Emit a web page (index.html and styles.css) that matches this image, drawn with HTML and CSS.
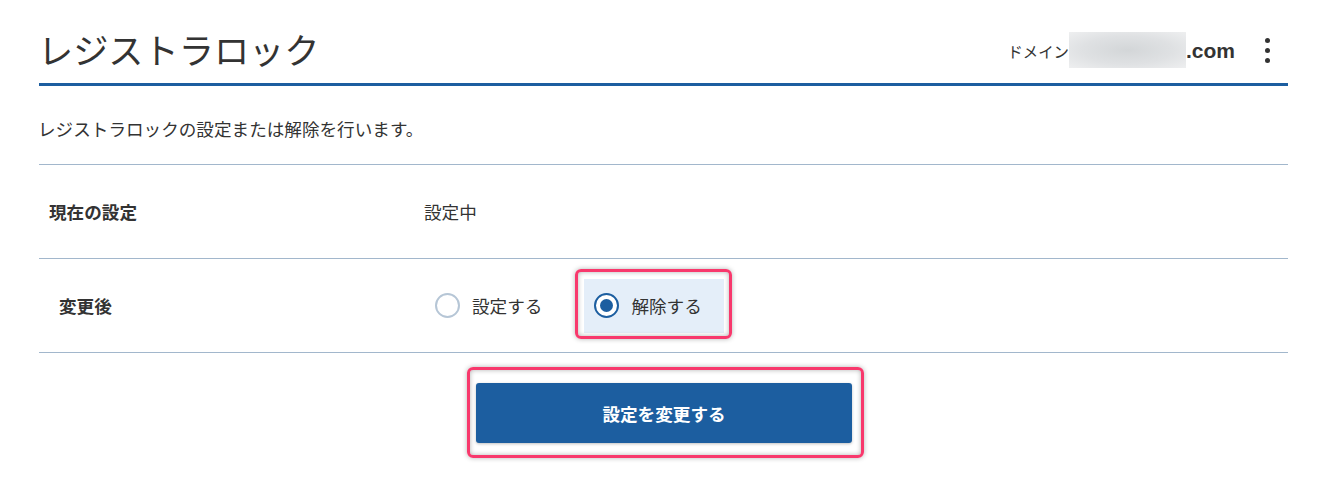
FILE: index.html
```html
<!DOCTYPE html>
<html lang="ja">
  <head>
    <meta charset="utf-8">
    <title>レジストラロック</title>
    <link rel="stylesheet" href="styles.css">
  </head>
  <body>
  <div class="page">
    <header class="head">
      <h1 class="title">レジストラロック</h1>
      <div class="domain">
        <span class="domain-label">ドメイン</span>
        <span class="domain-blur"></span>
        <span class="domain-tld">.com</span>
        <span class="kebab"><i></i><i></i><i></i></span>
      </div>
    </header>

    <p class="lead">レジストラロックの設定または解除を行います。</p>

    <div class="rows">
      <div class="row">
        <div class="row-label">現在の設定</div>
        <div class="row-value">設定中</div>
      </div>
      <div class="row">
        <div class="row-label row-label--wide">変更後</div>
        <div class="row-value">
          <div class="choices">
            <label class="choice">
              <input type="radio" name="lock" value="on">
              <span>設定する</span>
            </label>
            <label class="choice choice--on marked">
              <input type="radio" name="lock" value="off" checked>
              <span>解除する</span>
            </label>
          </div>
        </div>
      </div>
    </div>

    <div class="actions">
      <button class="btn marked marked--btn">設定を変更する</button>
    </div>
  </div>
  </body>
</html>
```

FILE: styles.css
```css
body {
  margin: 0;
  font-family: "Noto Sans CJK JP", "Noto Sans", sans-serif;
  font-size: 17.6px;
  color: #333;
  background: #fff;
}

.page {
  padding: 0 40px 40px 39px;
}

/* header */
.head {
  display: flex;
  align-items: center;
  justify-content: space-between;
  height: 86px;
  box-sizing: border-box;
  padding-top: 14px;
  border-bottom: 3px solid #1c5ea0;
}
.title {
  margin: 0 0 0 -1px;
  font-size: 35.2px;
  font-weight: 400;
  line-height: 1;
}
.domain {
  display: flex;
  align-items: center;
  margin-top: 3px;
}
.domain-label {
  font-size: 15.4px;
  line-height: 1;
  margin-top: 4px;
}
.domain-blur {
  width: 117px;
  height: 36px;
  background: radial-gradient(ellipse at center, #d3d6d8 0%, #dfe1e3 55%, #eeeff0 100%);
}
.domain-tld {
  font-family: "Liberation Sans", Arial, sans-serif;
  font-weight: 700;
  font-size: 21px;
  line-height: 1;
}
.kebab {
  display: flex;
  flex-direction: column;
  align-items: center;
  gap: 5px;
  width: 24px;
  margin: 0 9px 0 20px;
}
.kebab i {
  width: 5px;
  height: 5px;
  border-radius: 50%;
  background: #333;
}

.lead {
  margin: 30px 0 22px -1px;
  line-height: 26px;
}

/* rows */
.rows {
  border-bottom: 1px solid #a2b7cc;
}
.row {
  display: grid;
  grid-template-columns: 385px 1fr;
  align-items: center;
  height: 93px;
  border-top: 1px solid #a2b7cc;
}
.row-label {
  padding-left: 10px;
  font-weight: 700;
}
.row-label--wide {
  padding-left: 20px;
}

.choices {
  display: flex;
  align-items: center;
  gap: 31px;
}
.choice {
  display: flex;
  align-items: center;
  gap: 12px;
  height: 54px;
  padding: 0 11px;
  box-sizing: border-box;
}
.choice--on {
  padding: 0 22px 0 10px;
  background: #e4eef9;
}
.choice input {
  appearance: none;
  -webkit-appearance: none;
  margin: 0;
  width: 25px;
  height: 25px;
  border: 2px solid #b6c6d6;
  border-radius: 50%;
  box-sizing: border-box;
  background: #fff;
  display: grid;
  place-items: center;
}
.choice input:checked {
  border: 2.5px solid #1c5ea0;
}
.choice input:checked::before {
  content: "";
  width: 13px;
  height: 13px;
  border-radius: 50%;
  background: #1c5ea0;
}

/* button */
.actions {
  display: flex;
  justify-content: center;
  padding-top: 30px;
}
.btn {
  width: 376px;
  height: 60px;
  margin-left: 1px;
  border: none;
  border-radius: 3px;
  background: #1c5ea0;
  color: #fff;
  font-family: inherit;
  font-size: 17.6px;
  font-weight: 700;
  box-shadow: 0 1px 3px rgba(0, 0, 0, 0.25);
}

/* pink annotation frames */
.marked {
  position: relative;
}
.marked::after {
  content: "";
  position: absolute;
  top: -10px;
  right: -8px;
  bottom: -6px;
  left: -9px;
  border: 3px solid #f8386c;
  border-radius: 6px;
  box-shadow: 0 0 5px rgba(0, 0, 0, 0.3), inset 0 0 5px rgba(0, 0, 0, 0.3);
  pointer-events: none;
}
.marked--btn::after {
  top: -16px;
  right: -12px;
  bottom: -15px;
  left: -9px;
}
```
